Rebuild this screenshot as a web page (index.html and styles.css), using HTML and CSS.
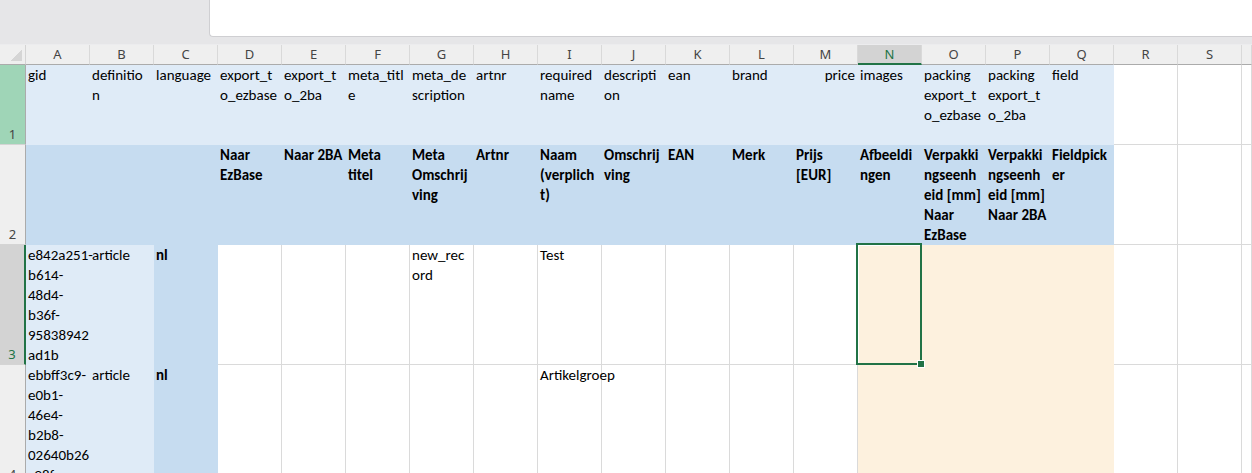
FILE: index.html
```html
<!DOCTYPE html>
<html lang="nl">
<head>
<meta charset="utf-8">
<title>Sheet</title>
<link rel="stylesheet" href="styles.css">
</head>
<body>
<div class="top">
  <div class="topbox"></div>
</div>
<div class="sheet">
  <!-- column headers -->
  <div class="corner"><span class="tri"></span></div>
  <div class="ch">A</div><div class="ch">B</div><div class="ch">C</div><div class="ch">D</div><div class="ch">E</div>
  <div class="ch">F</div><div class="ch">G</div><div class="ch">H</div><div class="ch">I</div><div class="ch">J</div>
  <div class="ch">K</div><div class="ch">L</div><div class="ch">M</div><div class="ch sel">N</div><div class="ch">O</div>
  <div class="ch">P</div><div class="ch">Q</div><div class="ch">R</div><div class="ch">S</div><div class="ch"></div>

  <!-- row 1 -->
  <div class="rh hl">1</div>
  <div class="c lb">gid</div>
  <div class="c lb">definitio<br>n</div>
  <div class="c lb">language</div>
  <div class="c lb">export_t<br>o_ezbase</div>
  <div class="c lb">export_t<br>o_2ba</div>
  <div class="c lb">meta_titl<br>e</div>
  <div class="c lb">meta_de<br>scription</div>
  <div class="c lb">artnr</div>
  <div class="c lb">required<br>name</div>
  <div class="c lb">descripti<br>on</div>
  <div class="c lb">ean</div>
  <div class="c lb">brand</div>
  <div class="c lb r">price</div>
  <div class="c lb">images</div>
  <div class="c lb">packing<br>export_t<br>o_ezbase</div>
  <div class="c lb">packing<br>export_t<br>o_2ba</div>
  <div class="c lb">field</div>
  <div class="c"></div><div class="c"></div><div class="c"></div>

  <!-- row 2 -->
  <div class="rh">2</div>
  <div class="c db b"></div>
  <div class="c db b"></div>
  <div class="c db b"></div>
  <div class="c db b">Naar<br>EzBase</div>
  <div class="c db b">Naar 2BA</div>
  <div class="c db b">Meta<br>titel</div>
  <div class="c db b">Meta<br>Omschrij<br>ving</div>
  <div class="c db b">Artnr</div>
  <div class="c db b">Naam<br>(verplich<br>t)</div>
  <div class="c db b">Omschrij<br>ving</div>
  <div class="c db b">EAN</div>
  <div class="c db b">Merk</div>
  <div class="c db b">Prijs<br>[EUR]</div>
  <div class="c db b">Afbeeldi<br>ngen</div>
  <div class="c db b">Verpakki<br>ngseenh<br>eid [mm]<br>Naar<br>EzBase</div>
  <div class="c db b">Verpakki<br>ngseenh<br>eid [mm]<br>Naar 2BA</div>
  <div class="c db b">Fieldpick<br>er</div>
  <div class="c"></div><div class="c"></div><div class="c"></div>

  <!-- row 3 -->
  <div class="rh act">3</div>
  <div class="c lb spill">e842a251-<br>b614-<br>48d4-<br>b36f-<br>95838942<br>ad1b</div>
  <div class="c lb">article</div>
  <div class="c db b">nl</div>
  <div class="c"></div><div class="c"></div><div class="c"></div>
  <div class="c">new_rec<br>ord</div>
  <div class="c"></div>
  <div class="c">Test</div>
  <div class="c"></div><div class="c"></div><div class="c"></div><div class="c"></div>
  <div class="c pe active"><span class="handle"></span></div>
  <div class="c pe"></div><div class="c pe"></div><div class="c pe"></div>
  <div class="c"></div><div class="c"></div><div class="c"></div>

  <!-- row 4 -->
  <div class="rh">4</div>
  <div class="c lb spill">ebbff3c9-<br>e0b1-<br>46e4-<br>b2b8-<br>02640b26<br>c98f</div>
  <div class="c lb">article</div>
  <div class="c db b">nl</div>
  <div class="c"></div><div class="c"></div><div class="c"></div>
  <div class="c"></div>
  <div class="c"></div>
  <div class="c spill">Artikelgroep</div>
  <div class="c"></div><div class="c"></div><div class="c"></div><div class="c"></div>
  <div class="c pe"></div>
  <div class="c pe"></div><div class="c pe"></div><div class="c pe"></div>
  <div class="c"></div><div class="c"></div><div class="c"></div>
</div>
</body>
</html>
```

FILE: styles.css
```css
html, body {
  margin: 0;
  padding: 0;
  background: #ffffff;
  overflow: hidden;
}
body {
  width: 1252px;
  height: 473px;
  font-family: "Carlito", "Lato", "Liberation Sans", sans-serif;
}
.top {
  height: 45px;
  background: #e6e6e8;
  display: flex;
  justify-content: flex-end;
  box-sizing: border-box;
  border-bottom: 1px solid #ececee;
}
.topbox {
  width: 1043px;
  height: 37px;
  background: #ffffff;
  border-left: 1px solid #cfcfd2;
  border-bottom: 1px solid #cfcfd2;
  border-bottom-left-radius: 4px;
  box-sizing: border-box;
}
.sheet {
  display: grid;
  grid-template-columns: 26px repeat(19, 64px) 1fr;
  grid-template-rows: 20px 80px 100px 120px 120px;
}
.corner {
  background: #efefef;
  border-right: 1px solid #d4d4d4;
  border-bottom: 1px solid #ababab;
  box-sizing: border-box;
  display: flex;
  justify-content: flex-end;
  align-items: flex-end;
  padding: 0 3px 3px 0;
}
.tri {
  width: 12px;
  height: 12px;
  background: linear-gradient(to bottom right, transparent 50%, #d5d5d5 50%);
}
.ch {
  background: #efefef;
  border-right: 1px solid #d9d9d9;
  border-bottom: 1px solid #ababab;
  box-sizing: border-box;
  font-family: "Noto Sans", "Open Sans", sans-serif;
  font-size: 13px;
  color: #444444;
  text-align: center;
  line-height: 19px;
}
.ch.sel {
  background: #d3d3d3;
  color: #217346;
  border-bottom: 2px solid #217346;
}
.rh {
  background: #efefef;
  border-right: 1px solid #ababab;
  border-bottom: 1px solid #d4d4d4;
  box-sizing: border-box;
  font-family: "Noto Sans", "Open Sans", sans-serif;
  font-size: 13px;
  color: #444444;
  display: flex;
  justify-content: center;
  align-items: flex-end;
  line-height: 19px;
}
.rh.hl {
  background: #9fd5b7;
}
.rh.act {
  background: #d3d3d3;
  color: #217346;
  border-right: 2px solid #217346;
}
.c {
  box-sizing: border-box;
  border-right: 1px solid #dadada;
  border-bottom: 1px solid #dadada;
  background: #ffffff;
  font-size: 15px;
  line-height: 20px;
  color: #000000;
  padding: 0 2px;
  white-space: nowrap;
  overflow: hidden;
}
.c.lb {
  background: #dfebf7;
  border-color: #dfebf7;
}
.c.db {
  background: #c6dcf0;
  border-color: #c6dcf0;
}
.c.pe {
  background: #fdf1de;
  border-color: #fdf1de;
}
.c.b {
  font-weight: bold;
}
.c.r {
  text-align: right;
}
.c.spill {
  overflow: visible;
  position: relative;
  z-index: 1;
}
.c.active {
  position: relative;
  overflow: visible;
}
.c.active::after {
  content: "";
  position: absolute;
  top: -2px;
  left: -2px;
  right: -1px;
  bottom: -1px;
  border: 2px solid #217346;
  box-shadow: inset 1px 1px 0 #ffffff;
}
.handle {
  position: absolute;
  right: -4px;
  bottom: -4px;
  width: 6px;
  height: 6px;
  background: #217346;
  border: 1px solid #ffffff;
  z-index: 2;
}
```
